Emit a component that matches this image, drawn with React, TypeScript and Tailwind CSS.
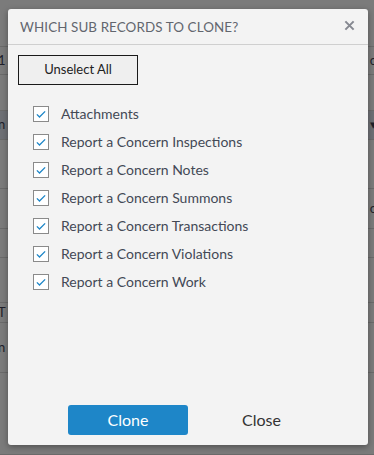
import { useState } from "react";

const RECORDS = [
  "Attachments",
  "Report a Concern Inspections",
  "Report a Concern Notes",
  "Report a Concern Summons",
  "Report a Concern Transactions",
  "Report a Concern Violations",
  "Report a Concern Work",
];

// Backdrop rows of the page behind the dialog (heights in px).
const BG_ROWS: { h: number; dark?: boolean; left?: string; right?: string }[] = [
  { h: 47 },
  { h: 28, left: "1", right: "o" },
  { h: 36 },
  { h: 29, dark: true, left: "n", right: "▾" },
  { h: 49 },
  { h: 40, right: "o" },
  { h: 29 },
  { h: 45 },
  { h: 20, left: "T" },
  { h: 50, left: "n" },
  { h: 82 },
];

function Check({ on, onClick }: { on: boolean; onClick: () => void }) {
  return (
    <button
      type="button"
      onClick={onClick}
      className="grid h-4 w-4 shrink-0 place-items-center border border-[#8a8a8a] bg-white"
    >
      {on && (
        <svg viewBox="0 0 16 16" className="h-3 w-3">
          <path
            d="M2.5 8.5 L6 12 L13.5 4.5"
            fill="none"
            stroke="#1e86c8"
            strokeWidth="1.8"
          />
        </svg>
      )}
    </button>
  );
}

export default function App() {
  const [checked, setChecked] = useState<boolean[]>(RECORDS.map(() => true));
  const allOn = checked.every(Boolean);

  return (
    <div
      className="relative h-[455px] w-[374px] overflow-hidden bg-[#7b7b7b]"
      style={{ fontFamily: "Lato, 'Open Sans', sans-serif" }}
    >
      {/* page behind the overlay */}
      <div className="flex flex-col">
        {BG_ROWS.map((r, i) => (
          <div
            key={i}
            className={`flex items-center justify-between border-b border-[#6a6a6a] text-[13px] text-[#1f1f2a] ${
              r.dark ? "bg-[#6e7075]" : ""
            }`}
            style={{ height: r.h }}
          >
            <span className="-ml-[2px]">{r.left ?? ""}</span>
            <span className="-mr-[3px]">{r.right ?? ""}</span>
          </div>
        ))}
      </div>

      {/* dialog */}
      <div className="absolute left-[8px] top-[9px] flex h-[436px] w-[360px] flex-col rounded-[3px] bg-[#f3f3f3] shadow-[0_2px_6px_rgba(0,0,0,0.35)]">
        <header className="flex h-[36px] items-center justify-between border-b border-[#cfcfcf] pl-[12px] pr-[13px]">
          <h2 className="pt-[2px] text-[13.4px] tracking-[0.1px] text-[#62666e]">
            WHICH SUB RECORDS TO CLONE?
          </h2>
          <button type="button" className="pb-[3px] text-[20px] leading-none text-[#8a8a8a]">
            <svg viewBox="0 0 12 12" className="h-[11px] w-[11px]">
              <path d="M1.5 1.5 L10.5 10.5 M10.5 1.5 L1.5 10.5" stroke="#858890" strokeWidth="2.2" />
            </svg>
          </button>
        </header>

        <div className="flex flex-1 flex-col pl-[10px] pt-[10px]">
          <button
            type="button"
            onClick={() => setChecked(RECORDS.map(() => !allOn))}
            className="h-[30px] w-[120px] border border-[#1a1a1a] bg-[#efefef] text-[13px] text-[#222]"
          >
            {allOn ? "Unselect All" : "Select All"}
          </button>

          <div className="mt-[15px] flex flex-col pl-[15px]">
            {RECORDS.map((name, i) => (
              <label key={name} className="flex h-[28px] items-center gap-[12px]">
                <Check
                  on={checked[i]}
                  onClick={() =>
                    setChecked((c) => c.map((v, j) => (j === i ? !v : v)))
                  }
                />
                <span className="pb-[1px] text-[14px] text-[#434956]">{name}</span>
              </label>
            ))}
          </div>
        </div>

        <footer className="flex items-center pb-[10px] pl-[60px]">
          <button
            type="button"
            className="h-[30px] w-[120px] rounded-[3px] bg-[#1e86c8] text-[16px] text-white"
          >
            Clone
          </button>
          <button type="button" className="ml-[54px] text-[16px] text-[#333]">
            Close
          </button>
        </footer>
      </div>
    </div>
  );
}
